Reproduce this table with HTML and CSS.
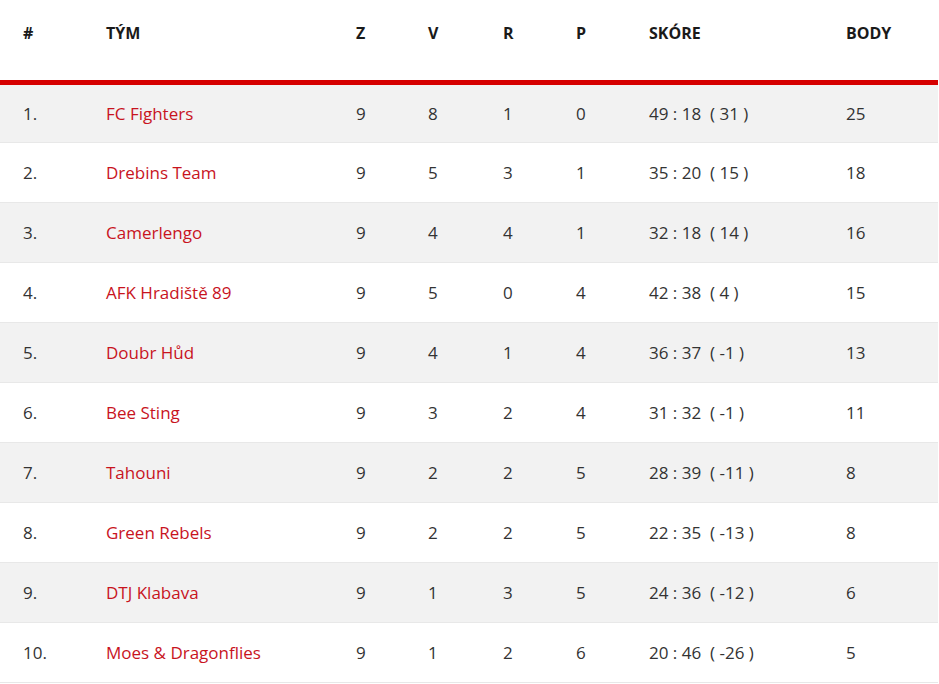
FILE: index.html
```html
<!DOCTYPE html>
<html lang="cs">
<head>
<meta charset="utf-8">
<title>Tabulka</title>
<link rel="stylesheet" href="styles.css">
</head>
<body>
<table class="standings">
  <colgroup>
    <col class="c-pos"><col class="c-team"><col class="c-z"><col class="c-v"><col class="c-r"><col class="c-p"><col class="c-score"><col class="c-pts">
  </colgroup>
  <thead>
    <tr><th>#</th><th>Tým</th><th>Z</th><th>V</th><th>R</th><th>P</th><th>Skóre</th><th>Body</th></tr>
  </thead>
  <tbody>
    <tr><td>1.</td><td><a href="#">FC Fighters</a></td><td>9</td><td>8</td><td>1</td><td>0</td><td>49 : 18 &nbsp;( 31 )</td><td>25</td></tr>
    <tr><td>2.</td><td><a href="#">Drebins Team</a></td><td>9</td><td>5</td><td>3</td><td>1</td><td>35 : 20 &nbsp;( 15 )</td><td>18</td></tr>
    <tr><td>3.</td><td><a href="#">Camerlengo</a></td><td>9</td><td>4</td><td>4</td><td>1</td><td>32 : 18 &nbsp;( 14 )</td><td>16</td></tr>
    <tr><td>4.</td><td><a href="#">AFK Hradiště 89</a></td><td>9</td><td>5</td><td>0</td><td>4</td><td>42 : 38 &nbsp;( 4 )</td><td>15</td></tr>
    <tr><td>5.</td><td><a href="#">Doubr Hůd</a></td><td>9</td><td>4</td><td>1</td><td>4</td><td>36 : 37 &nbsp;( -1 )</td><td>13</td></tr>
    <tr><td>6.</td><td><a href="#">Bee Sting</a></td><td>9</td><td>3</td><td>2</td><td>4</td><td>31 : 32 &nbsp;( -1 )</td><td>11</td></tr>
    <tr><td>7.</td><td><a href="#">Tahouni</a></td><td>9</td><td>2</td><td>2</td><td>5</td><td>28 : 39 &nbsp;( -11 )</td><td>8</td></tr>
    <tr><td>8.</td><td><a href="#">Green Rebels</a></td><td>9</td><td>2</td><td>2</td><td>5</td><td>22 : 35 &nbsp;( -13 )</td><td>8</td></tr>
    <tr><td>9.</td><td><a href="#">DTJ Klabava</a></td><td>9</td><td>1</td><td>3</td><td>5</td><td>24 : 36 &nbsp;( -12 )</td><td>6</td></tr>
    <tr><td>10.</td><td><a href="#">Moes &amp; Dragonflies</a></td><td>9</td><td>1</td><td>2</td><td>6</td><td>20 : 46 &nbsp;( -26 )</td><td>5</td></tr>
  </tbody>
</table>
</body>
</html>
```
FILE: styles.css
```css
html, body {
  margin: 0;
  padding: 0;
  background: #ffffff;
}

body {
  font-family: "Open Sans", "DejaVu Sans", sans-serif;
  color: #333333;
}

.standings {
  width: 938px;
  border-collapse: collapse;
  table-layout: fixed;
}

.c-pos { width: 83px; }
.c-team { width: 250px; }
.c-z { width: 72px; }
.c-v { width: 75px; }
.c-r { width: 73px; }
.c-p { width: 73px; }
.c-score { width: 197px; }
.c-pts { width: 115px; }

.standings th {
  height: 82px;
  box-sizing: border-box;
  padding: 22px 0 0 23px;
  vertical-align: top;
  text-align: left;
  text-transform: uppercase;
  font-size: 16px;
  font-weight: 700;
  color: #1a1a1a;
  border-bottom: 5px solid #d60000;
}

.standings td {
  height: 60px;
  box-sizing: border-box;
  padding: 0 0 0 23px;
  vertical-align: middle;
  font-size: 17px;
  font-weight: 400;
  color: #333333;
  border-bottom: 1px solid #e8e8e8;
  white-space: nowrap;
}

.standings tbody tr:nth-child(odd) td {
  background: #f2f2f2;
}

.standings a {
  color: #c8141e;
  text-decoration: none;
}
```
